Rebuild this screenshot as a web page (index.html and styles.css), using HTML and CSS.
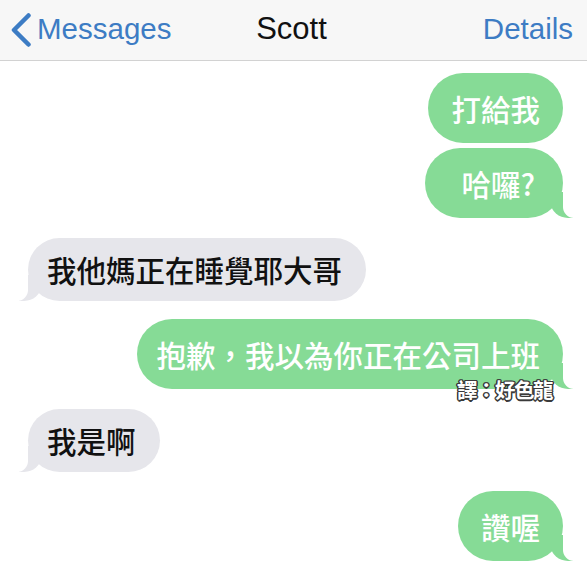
FILE: index.html
```html
<!DOCTYPE html>
<html lang="zh-Hant">
<head>
<meta charset="utf-8">
<title>Scott</title>
<link rel="stylesheet" href="styles.css">
</head>
<body>
<div class="screen">
  <header class="nav">
    <a class="back">
      <svg class="chevron" width="22" height="34" viewBox="0 0 22 34"><polyline points="18.5,2.5 4,17 18.5,31.5" fill="none" stroke="#3d7cc4" stroke-width="4.5" stroke-linecap="round" stroke-linejoin="round"/></svg>
      <span>Messages</span>
    </a>
    <div class="title">Scott</div>
    <a class="details">Details</a>
  </header>
  <main class="thread">
    <div class="bubble out first">打給我</div>
    <div class="bubble out tail close wide-left">哈囉?</div>
    <div class="bubble in tail">我他媽正在睡覺耶大哥</div>
    <div class="bubble out tail tight">抱歉，我以為你正在公司上班<span class="credit">譯：好色龍</span></div>
    <div class="bubble in tail">我是啊</div>
    <div class="bubble out tail last">讚喔</div>
  </main>
</div>
</body>
</html>
```

FILE: styles.css
```css
* { box-sizing: border-box; }
html, body { margin: 0; padding: 0; background: #ffffff; }
.screen {
  width: 587px;
  height: 573px;
  overflow: hidden;
  background: #ffffff;
  font-family: "Noto Sans CJK TC", "Noto Sans CJK SC", sans-serif;
}
.nav {
  height: 61px;
  background: #f7f7f7;
  border-bottom: 1px solid #d2d2d2;
  display: grid;
  grid-template-columns: 1fr auto 1fr;
  align-items: center;
  font-family: "Liberation Sans", Arial, sans-serif;
  font-size: 29.5px;
  padding: 0 14px 2px 10px;
}
.back {
  display: flex;
  align-items: center;
  gap: 5px;
  color: #3d7cc4;
}
.chevron { display: block; margin-top: 1px; }
.title {
  color: #111111;
  font-size: 31px;
}
.details {
  justify-self: end;
  color: #3d7cc4;
}
.thread {
  display: flex;
  flex-direction: column;
  padding-top: 12px;
}
.bubble {
  position: relative;
  font-size: 29.5px;
  font-weight: 500;
  white-space: nowrap;
  margin-top: 20px;
}
.bubble.first { margin-top: 0; }
.bubble.close { margin-top: 5px; }
.bubble.tight { margin-top: 18px; }
.bubble.last { margin-top: 19px; }
.bubble.out {
  align-self: flex-end;
  margin-right: 24px;
  background: #86db96;
  color: #ffffff;
  line-height: 70px;
  padding: 0 23px;
  border-radius: 35px;
}
.bubble.out.wide-left { padding-left: 36px; padding-right: 28px; }
.bubble.out.tight { padding-left: 19px; }
.bubble.in {
  align-self: flex-start;
  margin-left: 28px;
  background: #e6e6eb;
  color: #111111;
  line-height: 63px;
  padding: 0 24px 0 19px;
  border-radius: 32px;
}
.bubble.tail::before,
.bubble.tail::after {
  content: "";
  position: absolute;
  bottom: 0;
  height: 26px;
}
.bubble.out.tail::before {
  right: -10px;
  width: 22px;
  background: #86db96;
  border-bottom-left-radius: 17px 15px;
}
.bubble.out.tail::after {
  right: -28px;
  width: 28px;
  background: #ffffff;
  border-bottom-left-radius: 11px;
}
.bubble.in.tail::before {
  left: -9px;
  width: 22px;
  background: #e6e6eb;
  border-bottom-right-radius: 17px 15px;
}
.bubble.in.tail::after {
  left: -28px;
  width: 28px;
  background: #ffffff;
  border-bottom-right-radius: 11px;
}
.credit {
  position: absolute;
  right: 11px;
  top: 58px;
  z-index: 2;
  font-size: 20.5px;
  line-height: 24px;
  font-weight: 700;
  color: #ffffff;
  letter-spacing: -1.5px;
  text-shadow:
    1px 1px 0 #3a3a3a, -1px -1px 0 #3a3a3a,
    1px -1px 0 #3a3a3a, -1px 1px 0 #3a3a3a,
    0 1.5px 0 #3a3a3a, 0 -1.5px 0 #3a3a3a,
    1.5px 0 0 #3a3a3a, -1.5px 0 0 #3a3a3a;
}
```
